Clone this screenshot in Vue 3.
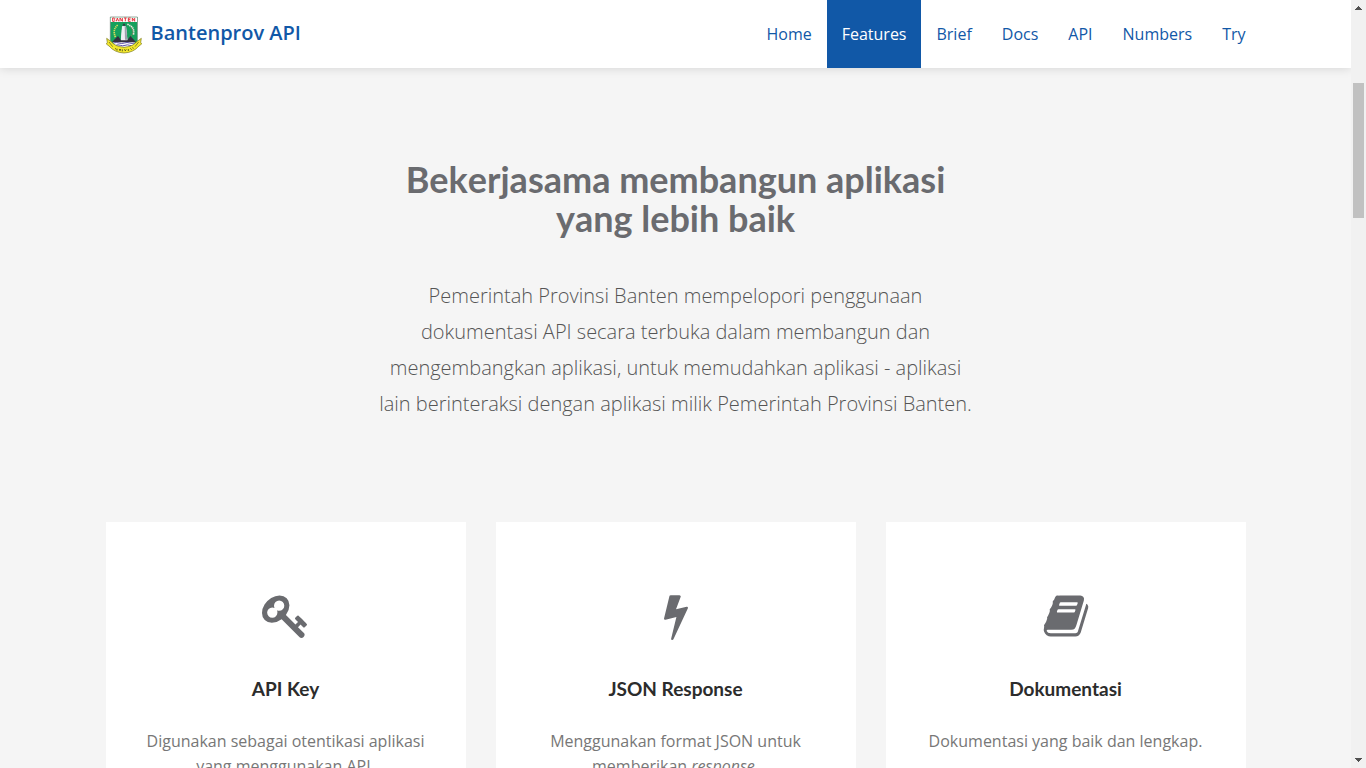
<script setup>
const links = ['Home', 'Features', 'Brief', 'Docs', 'API', 'Numbers', 'Try']
const active = 'Features'

const cards = [
  {
    title: 'API Key',
    text: 'Digunakan sebagai otentikasi aplikasi yang menggunakan API.',
    icon: 'M832 512q0-80-56-136t-136-56-136 56-56 136q0 42 19 83-41-19-83-19-80 0-136 56t-56 136 56 136 136 56 136-56 56-136q0-42-19-83 41 19 83 19 80 0 136-56t56-136zm851 704q0 17-49 66t-66 49q-9 0-28.5-16t-36.5-33-38.5-40-24.5-26l-96 96 220 220q28 28 28 68 0 42-39 81t-81 39q-40 0-68-28l-671-671q-176 131-365 131-163 0-265.5-102.5t-102.5-265.5q0-160 95-313t248-248 313-95q163 0 265.5 102.5t102.5 265.5q0 189-131 365l355 355 96-96q-3-3-26-24.5t-40-38.5-33-36.5-16-28.5q0-17 49-66t66-49q13 0 23 10 6 6 46 44.5t82 79.5 86.5 86 73 78 28.5 41z',
  },
  {
    title: 'JSON Response',
    text: 'Menggunakan format JSON untuk memberikan ',
    em: 'response',
    icon: 'M1333 566q18 20 7 44l-540 1157q-13 25-42 25-4 0-14-2-17-5-25.5-19t-4.5-30l197-808-406 101q-4 1-12 1-18 0-31-11-18-15-13-39l201-825q4-16 18-26.5t32-10.5h328q19 0 32 12.5t13 29.5q0 8-5 18l-171 463 396-98q8-2 12-2 19 0 34 15z',
  },
  {
    title: 'Dokumentasi',
    text: 'Dokumentasi yang baik dan lengkap.',
    icon: 'M1703 478q40 57 18 129l-275 906q-19 64-76.5 107.5t-122.5 43.5h-923q-77 0-148.5-53.5t-99.5-131.5q-24-67-2-127 0-4 3-27t4-37q1-8-3-21.5t-3-19.5q2-11 8-21t16.5-23.5 16.5-23.5q23-38 45-91.5t30-91.5q3-10 .5-30t-.5-28q3-11 17-28t17-23q21-36 42-92t25-90q1-9-2.5-32t.5-28q4-13 22-30.5t22-22.5q19-26 42.5-84.5t27.5-96.5q1-8-3-25.5t-2-26.5q2-8 9-18t18-23 17-21q8-12 16.5-30.5t15-35 16-36 19.5-32 26.5-23.5 36-11.5 47.5 5.5l-1 3q38-9 51-9h761q74 0 114 56t18 130l-274 906q-36 119-71.5 153.5t-128.5 34.5h-869q-27 0-38 15-11 16-1 43 24 70 144 70h923q29 0 56-15.5t35-41.5l300-987q7-22 5-57 38 15 59 43zm-1064 2q-4 13 2 22.5t20 9.5h608q13 0 25.5-9.5t16.5-22.5l21-64q4-13-2-22.5t-20-9.5h-608q-13 0-25.5 9.5t-16.5 22.5zm-83 256q-4 13 2 22.5t20 9.5h608q13 0 25.5-9.5t16.5-22.5l21-64q4-13-2-22.5t-20-9.5h-608q-13 0-25.5 9.5t-16.5 22.5z',
  },
]
</script>

<template>
  <div class="window">
    <div class="page">
      <header class="topbar">
        <div class="container bar">
          <a class="brand" href="#">
            <svg class="logo" viewBox="0 0 108 114" aria-hidden="true">
              <path d="M13 3H94V78Q88 92 54 104Q19 92 13 78Z" fill="#16a05c" stroke="#6d7a70" stroke-width="2" />
              <path d="M14 4H93V18H14Z" fill="#fff" />
              <path d="M20 6v10h5q3-2 0-5q3-3 0-5zM31 16l3-10 4 10M42 16V6l7 10V6M54 6h8M58 6v10M74 6h-7v10h7M67 11h6M79 16V6l7 10V6" fill="none" stroke="#e5343c" stroke-width="3" />
              <path d="M35 27Q18 42 29 65" fill="none" stroke="#d8d95c" stroke-width="5" stroke-dasharray="4 2" />
              <path d="M64 25Q88 33 82 57" fill="none" stroke="#f5e9e4" stroke-width="5" stroke-dasharray="4 2" />
              <path d="M75 35Q85 47 75 61" fill="none" stroke="#d0524c" stroke-width="2" stroke-dasharray="3 3" />
              <path d="M51 23h6l1 6h-8z" fill="#373b46" />
              <path d="M49 31h10l5 43H44z" fill="#eeeef2" />
              <path d="M56 31h4l5 43h-7z" fill="#9d9fab" />
              <path d="M47 43h15M46 54h18" stroke="#b2b4be" stroke-width="2" />
              <path d="M20 75Q54 70 88 75L83 88Q54 101 25 88Z" fill="#fff" />
              <path d="M17 79L36 60L45 73L64 73L73 60L91 79Z" fill="#34303f" />
              <path d="M48 31h12l4 40H45z" fill="#eeeef2" />
              <path d="M56 31h4l4 40h-7z" fill="#9d9fab" />
              <path d="M23 81q8-3 16 0t16 0 16 0 14 0M29 88q7-3 14 0t14 0 14 0 10 0" fill="none" stroke="#5b4fa6" stroke-width="3" />
              <path d="M2 67L17 78Q26 91 54 94Q82 91 91 78L106 67L104 79L107 84L99 90Q82 110 54 111Q26 110 9 90L1 84L4 79Z" fill="#f3e82d" stroke="#77751f" stroke-width="2" />
              <path d="M9 78L20 92M98 78L87 92" stroke="#8b871c" stroke-width="3" />
              <path d="M27 97l4 3M33 98v6M39 99l5 5M45 99l-5 5M49 100v6M55 100l5 5M61 100l-5 5M67 99v6M73 97l4 4M80 94l2 4" stroke="#68651d" stroke-width="3" />
            </svg>
            <span>Bantenprov API</span>
          </a>
          <nav class="nav">
            <a v-for="link in links" :key="link" href="#" :class="{ active: link === active }">{{ link }}</a>
          </nav>
        </div>
      </header>

      <main class="container">
        <section class="intro">
          <h2>Bekerjasama membangun aplikasi yang lebih baik</h2>
          <p>Pemerintah Provinsi Banten mempelopori penggunaan dokumentasi API secara terbuka dalam membangun dan mengembangkan aplikasi, untuk memudahkan aplikasi - aplikasi lain berinteraksi dengan aplikasi milik Pemerintah Provinsi Banten.</p>
        </section>
        <section class="cards">
          <article v-for="card in cards" :key="card.title" class="card">
            <svg class="icon" viewBox="0 0 1792 1792" aria-hidden="true"><path :d="card.icon" /></svg>
            <h3>{{ card.title }}</h3>
            <p>{{ card.text }}<template v-if="card.em"><em>{{ card.em }}</em>.</template></p>
          </article>
        </section>
      </main>
    </div>

    <div class="scrollbar" aria-hidden="true">
      <svg viewBox="0 0 15 15"><path d="M7 6h1v1h1v1h1v1h1v1H4V9h1V8h1V7h1z" /></svg>
      <div class="track"><div class="thumb"></div></div>
      <svg viewBox="0 0 15 15"><path d="M4 5h7v1h-1v1H9v1H8v1H7V8H6V7H5V6H4z" /></svg>
    </div>
  </div>
</template>

<style>
body {
  background: #f5f5f5;
}
</style>

<style scoped>
* {
  box-sizing: border-box;
}
.window {
  display: flex;
  height: 100vh;
  overflow: hidden;
  background: #f5f5f5;
  font-family: "Open Sans", "Noto Sans", sans-serif;
}
.page {
  flex: 1;
  min-width: 0;
  overflow: hidden;
}
.container {
  max-width: 1170px;
  margin: 0 auto;
  padding: 0 15px;
}
.topbar {
  background: #fff;
  box-shadow: 0 0 10px rgba(0, 0, 0, 0.15);
}
.bar {
  display: flex;
  justify-content: space-between;
  height: 68px;
}
.brand {
  display: flex;
  align-items: center;
  gap: 9px;
  color: #1158a7;
  font-size: 20px;
  font-weight: 600;
  line-height: 28px;
  text-decoration: none;
}
.brand span {
  padding-bottom: 2px;
}
.logo {
  width: 36px;
  height: 38px;
  margin-top: 2px;
}
.nav {
  display: flex;
  margin-right: -15px;
}
.nav a {
  padding: 0 15px;
  color: #1158a7;
  font-size: 16px;
  line-height: 68px;
  text-decoration: none;
}
.nav a.active {
  background: #1158a7;
  color: #fff;
}
.intro {
  max-width: 600px;
  margin: 0 auto;
  padding: 92px 0 100px;
  text-align: center;
}
h2 {
  margin: 0 0 40px;
  color: #6a6b6f;
  font: 700 36px/39px Lato, sans-serif;
  font-kerning: none;
}
.intro p {
  margin: 0;
  color: #555;
  font-size: 20px;
  font-weight: 300;
  line-height: 36px;
}
.cards {
  display: grid;
  grid-template-columns: repeat(3, 1fr);
  gap: 30px;
}
.card {
  padding: 70px 30px;
  background: #fff;
  text-align: center;
}
.icon {
  display: block;
  width: 48px;
  height: 48px;
  margin: 0 auto;
  fill: #6a6b6f;
}
h3 {
  margin: 37px 0 28px;
  color: #2c2c2c;
  font: 700 19px/24px Lato, sans-serif;
}
.card p {
  margin: 0;
  color: #777;
  font-size: 16px;
  line-height: 25px;
}
.scrollbar {
  display: flex;
  flex-direction: column;
  width: 15px;
  background: #f1f1f1;
}
.scrollbar svg {
  width: 15px;
  height: 15px;
  fill: #505050;
}
.track {
  flex: 1;
  padding: 68px 2px 0;
}
.thumb {
  height: 135px;
  background: #c1c1c1;
}
</style>
